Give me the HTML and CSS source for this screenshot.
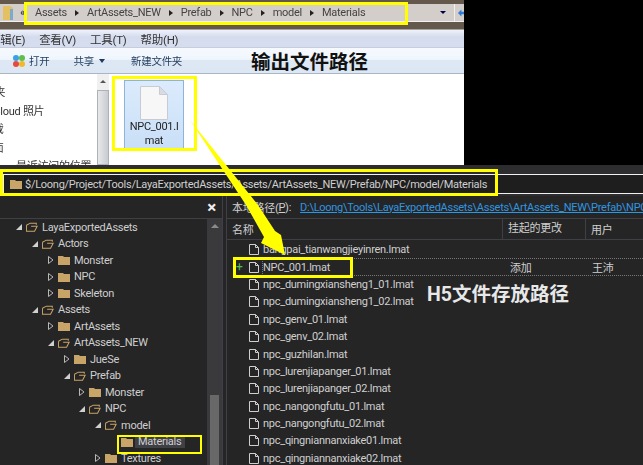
FILE: index.html
```html
<!DOCTYPE html>
<html>
<head>
  <meta charset="utf-8">
  <title>NPC_001.lmat</title>
  <link rel="stylesheet" href="styles.css">
</head>
<body>

<svg class="defs" width="0" height="0">
  <symbol id="closed" viewBox="0 0 12 10"><path d="M0 1h5l1 1h6v8H0z" fill="#c9a468"/></symbol>
  <symbol id="open" viewBox="0 0 14 11"><path d="M.5 3.500 5 1h7v2M.5 3.500v7h9.500l3-6H6" fill="none" stroke="#c9a468" stroke-width="1.200"/></symbol>
  <symbol id="doc" viewBox="0 0 10 11"><path d="M.5.5h6l3 3v7H.5zM6.500.5v3h3" fill="none" stroke="#cfcfcf"/></symbol>
  <symbol id="down" viewBox="0 0 6 6"><path d="M6 0v6H0z" fill="#d0d0d0"/></symbol>
  <symbol id="right" viewBox="0 0 6 8"><path d="M.5.5 5 4 .5 7.500z" fill="none" stroke="#b8b8b8"/></symbol>
</svg>

<div class="top">
  <div class="explorer">
    <div class="addr-wrap">
      <div class="addr">
        <svg class="addr-folder" width="10" height="14" viewBox="0 0 10 14"><path d="M0 0h7l3 2v12H0z" fill="#e3c060"/><path d="M7 3h3v11H7z" fill="#7fa8cf"/></svg>
        <span class="chev">«</span>
        <span>Assets</span><i class="sep"></i>
        <span>ArtAssets_NEW</span><i class="sep"></i>
        <span>Prefab</span><i class="sep"></i>
        <span>NPC</span><i class="sep"></i>
        <span>model</span><i class="sep"></i>
        <span>Materials</span>
        <i class="drop"></i>
      </div>
      <div class="go"><svg width="7" height="8" viewBox="0 0 7 8"><path d="M0 4 4 0v2.500h3v3H4V8z" fill="#2b7bd6"/></svg></div>
    </div>
    <div class="menu">
      <span class="m-first">编辑(E)</span><span>查看(V)</span><span>工具(T)</span><span>帮助(H)</span>
    </div>
    <div class="toolbar">
      <svg class="petal" width="14" height="14" viewBox="0 0 14 14">
        <circle cx="4" cy="4" r="3" fill="#3aa0e8"/><circle cx="10" cy="4" r="3" fill="#5cc04a"/>
        <circle cx="4" cy="10" r="3" fill="#e8493c"/><circle cx="10" cy="10" r="3" fill="#f0b92c"/>
      </svg>
      <span class="t-open">打开</span>
      <span class="t-share">共享</span><i class="caret"></i>
      <span class="t-new">新建文件夹</span>
    </div>
    <div class="content">
      <div class="nav">
        <div class="nav-a">收藏夹</div>
        <div class="nav-b">iCloud 照片</div>
        <div class="nav-c">下载</div>
        <div class="nav-c">桌面</div>
        <div class="nav-e">最近访问的位置</div>
      </div>
      <div class="vscroll"><i class="up"></i><i class="thumb"></i></div>
      <div class="files">
        <div class="tile">
          <svg width="28" height="34" viewBox="0 0 28 34"><path d="M.5.500h19l8 8v25H.500z" fill="#f7f7f7" stroke="#c8ccd2"/><path d="M19.500.500v8h8z" fill="#d8dce2" stroke="#c8ccd2"/></svg>
          <div class="tile-name">NPC_001.l<br>mat</div>
        </div>
      </div>
    </div>
  </div>
  <div class="blackout"></div>
</div>

<div class="vs">
  <div class="strip"></div>
  <div class="path-row">
    <div class="path-box">
      <svg class="path-folder" width="12" height="10"><use href="#closed"/></svg>$/Loong/Project/Tools/LayaExportedAssets/Assets/ArtAssets_NEW/Prefab/NPC/model/Materials
    </div>
  </div>
  <div class="panes">
    <div class="tree-pane">
      <div class="tree-head"><span class="close">×</span></div>
      <div class="tree-body">
        <div class="tree">
          <div class="node lv0"><svg class="tw" width="6" height="6"><use href="#down"/></svg><svg class="fo" width="12" height="10"><use href="#open"/></svg>LayaExportedAssets</div>
          <div class="node lv1"><svg class="tw" width="6" height="6"><use href="#down"/></svg><svg class="fo" width="12" height="10"><use href="#open"/></svg>Actors</div>
          <div class="node lv2"><svg class="tw" width="6" height="8"><use href="#right"/></svg><svg class="fo" width="12" height="10"><use href="#closed"/></svg>Monster</div>
          <div class="node lv2"><svg class="tw" width="6" height="8"><use href="#right"/></svg><svg class="fo" width="12" height="10"><use href="#closed"/></svg>NPC</div>
          <div class="node lv2"><svg class="tw" width="6" height="8"><use href="#right"/></svg><svg class="fo" width="12" height="10"><use href="#closed"/></svg>Skeleton</div>
          <div class="node lv1"><svg class="tw" width="6" height="6"><use href="#down"/></svg><svg class="fo" width="12" height="10"><use href="#open"/></svg>Assets</div>
          <div class="node lv2"><svg class="tw" width="6" height="8"><use href="#right"/></svg><svg class="fo" width="12" height="10"><use href="#closed"/></svg>ArtAssets</div>
          <div class="node lv2"><svg class="tw" width="6" height="6"><use href="#down"/></svg><svg class="fo" width="12" height="10"><use href="#open"/></svg>ArtAssets_NEW</div>
          <div class="node lv3"><svg class="tw" width="6" height="8"><use href="#right"/></svg><svg class="fo" width="12" height="10"><use href="#closed"/></svg>JueSe</div>
          <div class="node lv3"><svg class="tw" width="6" height="6"><use href="#down"/></svg><svg class="fo" width="12" height="10"><use href="#open"/></svg>Prefab</div>
          <div class="node lv4"><svg class="tw" width="6" height="8"><use href="#right"/></svg><svg class="fo" width="12" height="10"><use href="#closed"/></svg>Monster</div>
          <div class="node lv4"><svg class="tw" width="6" height="6"><use href="#down"/></svg><svg class="fo" width="12" height="10"><use href="#open"/></svg>NPC</div>
          <div class="node lv5"><svg class="tw" width="6" height="6"><use href="#down"/></svg><svg class="fo" width="12" height="10"><use href="#open"/></svg>model</div>
          <div class="node lv6"><i class="tw"></i><svg class="fo" width="12" height="10"><use href="#closed"/></svg><span class="selected">Materials</span></div>
          <div class="node lv5"><svg class="tw" width="6" height="8"><use href="#right"/></svg><svg class="fo" width="12" height="10"><use href="#closed"/></svg>Textures</div>
        </div>
        <div class="tree-scroll"><i class="t-up"></i><i class="t-thumb"></i></div>
      </div>
    </div>
    <div class="list-pane">
      <div class="local">本地路径(<u>P</u>):<a class="link">D:\Loong\Tools\LayaExportedAssets\Assets\ArtAssets_NEW\Prefab\NPC\model\Materials</a></div>
      <div class="cols">
        <div class="c-name">名称<i class="sort"></i></div><div class="c-pend">挂起的更改</div><div class="c-user">用户</div>
      </div>
      <div class="rows">
        <div class="row"><svg width="10" height="11"><use href="#doc"/></svg>bangpai_tianwangjieyinren.lmat</div>
        <div class="row"><i class="plus">+</i><svg width="10" height="11"><use href="#doc"/></svg><div class="focus"><span class="r-name">NPC_001.lmat</span><span class="r-pend">添加</span><span>王沛</span></div></div>
        <div class="row"><svg width="10" height="11"><use href="#doc"/></svg>npc_dumingxiansheng1_01.lmat</div>
        <div class="row"><svg width="10" height="11"><use href="#doc"/></svg>npc_dumingxiansheng1_02.lmat</div>
        <div class="row"><svg width="10" height="11"><use href="#doc"/></svg>npc_genv_01.lmat</div>
        <div class="row"><svg width="10" height="11"><use href="#doc"/></svg>npc_genv_02.lmat</div>
        <div class="row"><svg width="10" height="11"><use href="#doc"/></svg>npc_guzhilan.lmat</div>
        <div class="row"><svg width="10" height="11"><use href="#doc"/></svg>npc_lurenjiapanger_01.lmat</div>
        <div class="row"><svg width="10" height="11"><use href="#doc"/></svg>npc_lurenjiapanger_02.lmat</div>
        <div class="row"><svg width="10" height="11"><use href="#doc"/></svg>npc_nangongfutu_01.lmat</div>
        <div class="row"><svg width="10" height="11"><use href="#doc"/></svg>npc_nangongfutu_02.lmat</div>
        <div class="row"><svg width="10" height="11"><use href="#doc"/></svg>npc_qingniannanxiake01.lmat</div>
        <div class="row"><svg width="10" height="11"><use href="#doc"/></svg>npc_qingniannanxiake02.lmat</div>
      </div>
    </div>
  </div>
</div>

<!-- annotations drawn over the screenshots -->
<div class="mark mark-addr"></div>
<div class="mark mark-file"></div>
<div class="mark mark-path"></div>
<div class="mark mark-row"></div>
<div class="mark mark-tree"></div>
<div class="note note-out">输出文件路径</div>
<div class="note note-h5">H5文件存放路径</div>
<svg class="arrow" width="643" height="465" viewBox="0 0 643 465">
  <path d="M190 120 258 205 275 231 281 235 285 255 261 243 264 237 246 205z" fill="#ffff00"/>
</svg>

</body>
</html>
```

FILE: styles.css
```css
* { box-sizing: border-box; }
html, body { margin: 0; height: 465px; overflow: hidden; }
body { position: relative; width: 643px; background: #000; font: 11px Roboto, "Noto Sans CJK SC", sans-serif; letter-spacing: -.27px; }
i { font-style: normal; }
.defs { position: absolute; }

.top { display: flex; height: 165px; }
.explorer { width: 464px; display: flex; flex-direction: column; background: #fff; overflow: hidden; filter: blur(.3px); }
.blackout { flex: 1; background: #000; }

.addr-wrap { height: 30px; display: flex; padding: 4px 0 7px; background: #64574c; border-bottom: 1px solid #a8a29c; }
.addr { flex: 1; display: flex; align-items: center; background: #d3cec9; border-bottom: 1px solid #f2f0ee; color: #444; white-space: nowrap; }
.addr-folder { margin-left: 3px; }
.chev { margin-left: 7px; width: 15px; color: #222; }
.sep { margin: 0 8px; border-left: 4px solid #222; border-top: 3px solid transparent; border-bottom: 3px solid transparent; }
.drop { margin-left: auto; margin-right: 8px; border-top: 3px solid #004; border-left: 3px solid transparent; border-right: 3px solid transparent; }
.go { width: 10px; display: flex; align-items: center; padding-left: 3px; background: #d3cec9; border-left: 1px solid #f2f0ee; border-bottom: 1px solid #f2f0ee; }

.menu { height: 18px; display: flex; gap: 14px; align-items: center; background: linear-gradient(#eef2fa 0, #d5dcee 40%, #d6ddee 100%); font-size: 11.500px; color: #333; border-bottom: 1px solid #c6cede; }
.m-first { margin-left: -11px; }

.toolbar { height: 26px; display: flex; align-items: center; background: linear-gradient(#f6faff 0, #f0f6fd 45%, #dde8f4 50%, #dce7f3 100%); border-bottom: 1px solid #a9b6c6; color: #1e395b; font-size: 10.500px; }
.petal { margin-left: 12px; }
.t-open { margin-left: 3px; }
.t-share { margin-left: 24px; }
.caret { margin-left: 5px; border-top: 4px solid #1e395b; border-left: 3px solid transparent; border-right: 3px solid transparent; }
.t-new { margin-left: 26px; }

.content { flex: 1; display: flex; min-height: 0; }
.nav { width: 97px; padding-top: 10px; color: #333; line-height: 18.500px; white-space: nowrap; overflow: hidden; }
.nav-a { margin-left: -27px; }
.nav-b { margin-left: -9px; }
.nav-c { margin-left: -18px; }
.nav-e { margin-left: 16px; }
.vscroll { width: 12px; display: flex; flex-direction: column; align-items: center; background: #f0f0f0; }
.up { margin-top: 6px; border-bottom: 3px solid #555; border-left: 3px solid transparent; border-right: 3px solid transparent; }
.thumb { display: block; width: 12px; flex: 1; margin-top: 7px; background: linear-gradient(90deg, #e8e8e8, #c8ccd2); border: 1px solid #aeb2b8; }
.files { flex: 1; padding: 6px 0 0 15px; }
.tile { width: 60px; height: 71px; padding-top: 5px; background: linear-gradient(#dcebfc, #c8dff7); border: 1px solid #8cb4dc; text-align: center; }
.tile svg { display: block; margin: 0 auto; }
.tile-name { color: #222; line-height: 14px; }

.vs { height: 300px; background: #252526; color: #cfcfcf; }
.strip { height: 8px; background: #2d2d30; }
.path-row { height: 23px; padding: 1px 0 0 3px; background: #2d2d30; }
.path-box { height: 20px; display: flex; align-items: center; padding-left: 6px; background: #1e1e1e; border: 1px solid #f0f0f0; border-right: 0; white-space: nowrap; overflow: hidden; }
.path-folder { margin-right: 3px; flex: none; }

.panes { display: flex; height: 269px; }
.tree-pane { width: 223px; display: flex; flex-direction: column; border-right: 1px solid #3f3f46; }
.tree-head { height: 23px; display: flex; justify-content: flex-end; align-items: center; padding-right: 6px; border-bottom: 1px solid #3f3f46; }
.close { color: #f0f0f0; font-size: 17px; font-weight: bold; line-height: 18px; }
.tree-body { flex: 1; display: flex; min-height: 0; }
.tree { flex: 1; overflow: hidden; }
.node { height: 16.500px; display: flex; align-items: center; white-space: nowrap; }
.tw { width: 6px; flex: none; margin-right: 4px; }
.fo { flex: none; margin-right: 4px; }
.lv0 { padding-left: 16px; }
.lv1 { padding-left: 32px; }
.lv2 { padding-left: 48px; }
.lv3 { padding-left: 64px; }
.lv4 { padding-left: 79px; }
.lv5 { padding-left: 95px; }
.lv6 { padding-left: 111px; }
.selected { background: #3f3f46; padding: 0 4px 0 3px; margin-left: -2px; }
.tree-scroll { width: 15px; display: flex; flex-direction: column; align-items: center; background: #3a3a3d; }
.t-up { margin-top: 5px; border-bottom: 4px solid #8a8a8a; border-left: 4px solid transparent; border-right: 4px solid transparent; }
.t-thumb { display: block; width: 9px; height: 70px; margin-top: auto; background: #686868; }

.list-pane { flex: 1; margin-left: 3px; border-left: 1px solid #3f3f46; min-width: 0; overflow: hidden; }
.local { height: 23px; display: flex; align-items: center; padding-left: 5px; white-space: nowrap; border-bottom: 1px solid #3f3f46; }
.link { margin-left: 9px; color: #2f96e0; text-decoration: underline; }
.cols { height: 21px; display: flex; align-items: center; border-bottom: 1px solid #3f3f46; }
.c-name { width: 276px; display: flex; align-items: center; padding-left: 5px; border-right: 1px solid #3f3f46; height: 100%; }
.sort { width: 4px; height: 1px; margin-left: 10px; background: #cfcfcf; }
.c-pend { width: 83px; padding-left: 5px; border-right: 1px solid #3f3f46; height: 100%; line-height: 20px; }
.c-user { padding-left: 5px; }
.rows { padding-top: 1px; }
.row { position: relative; height: 17.400px; display: flex; align-items: center; padding-left: 22px; white-space: nowrap; }
.row svg { flex: none; margin-right: 4px; }
.focus { flex: 1; height: 100%; display: flex; align-items: center; margin-left: -1px; border: 1px dotted #777; border-right: 0; }
.plus { position: absolute; left: 9px; color: #4ec04e; font-size: 12px; }
.r-name { width: 247px; }
.r-pend { width: 82px; }

.mark { position: absolute; border: 3px solid #ffff00; }
.mark-addr { left: 24px; top: 2px; width: 384px; height: 23px; }
.mark-file { left: 112px; top: 76px; width: 85px; height: 75px; }
.mark-path { left: 0; top: 169px; width: 498px; height: 27px; }
.mark-row { left: 233px; top: 257px; width: 120px; height: 21px; }
.mark-tree { left: 117px; top: 435px; width: 85px; height: 19px; border-width: 2px; }
.note { position: absolute; font-weight: bold; white-space: nowrap; letter-spacing: 0; }
.note-out { left: 251px; top: 49px; color: #111; font-size: 19.500px; line-height: 28px; }
.note-h5 { left: 427px; top: 283px; color: #e8e8e8; font-size: 19.500px; line-height: 24px; }
.arrow { position: absolute; left: 0; top: 0; }
```
